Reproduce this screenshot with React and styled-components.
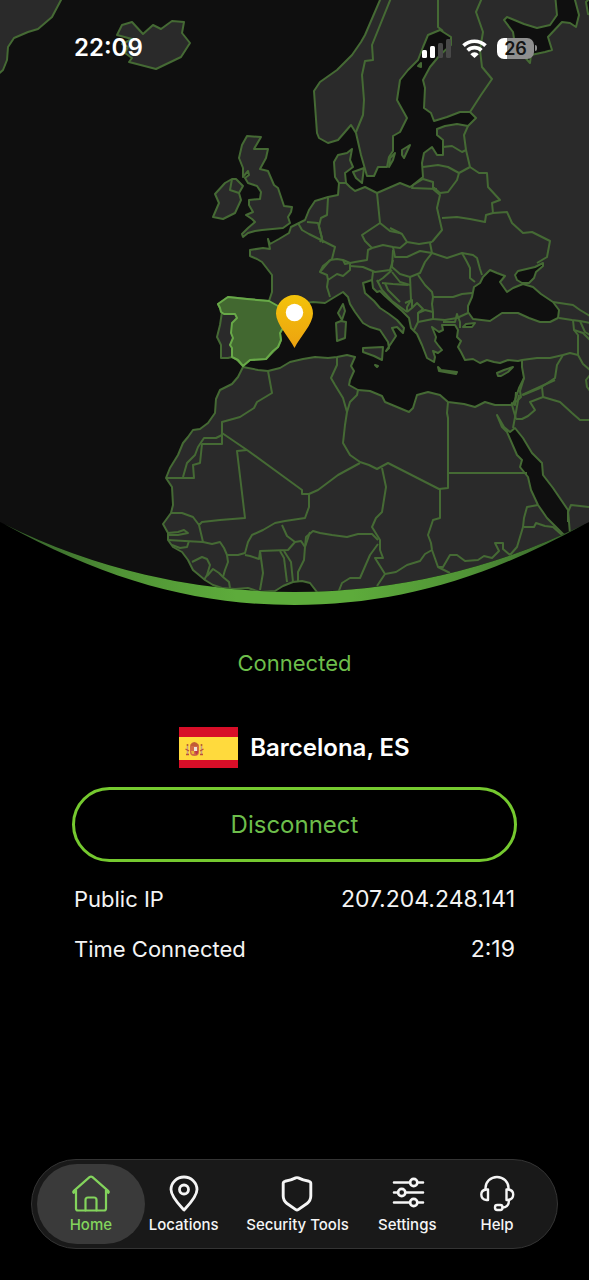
import React from "react";
import styled, { createGlobalStyle, css } from "styled-components";

const GlobalStyle = createGlobalStyle`
  * { box-sizing: border-box; }
  body { margin: 0; background: #000; }
`;

const Screen = styled.div`
  position: relative;
  min-height: 100vh;
  display: flex;
  flex-direction: column;
  background: #000;
  color: #fff;
  font-family: Inter, "Liberation Sans", sans-serif;
`;

const StatusBar = styled.header`
  position: absolute;
  inset: 0 0 auto 0;
  display: flex;
  align-items: center;
  justify-content: space-between;
  padding: 32px 52px 0 74px;
`;

const Clock = styled.time`
  font-size: 24px;
  line-height: 32px;
  font-weight: 600;
`;

const Indicators = styled.div`
  display: flex;
  align-items: center;
  gap: 10px;
`;

const Battery = styled.div`
  display: flex;
  align-items: center;
  gap: 1px;
`;

const BatteryLevel = styled.span`
  width: 37px;
  border-radius: 7px;
  background: linear-gradient(90deg, #fff 28%, #8f8f8f 28%);
  color: #161616;
  font-size: 18px;
  line-height: 21px;
  font-weight: 600;
  text-align: center;
`;

const BatteryTip = styled.span`
  width: 2px;
  height: 6px;
  border-radius: 0 2px 2px 0;
  background: #8f8f8f;
`;

const WorldMap = styled.svg`
  display: block;
  width: 100%;
  height: auto;
`;

const Panel = styled.main`
  display: flex;
  flex-direction: column;
  align-items: stretch;
  padding: 43px 72px 40px;
`;

const ConnectionState = styled.p`
  margin: 0 0 49px;
  color: #6dbe4b;
  font-size: 22px;
  line-height: 30px;
  text-align: center;
`;

const Place = styled.div`
  display: flex;
  align-items: center;
  justify-content: center;
  gap: 12px;
  margin-bottom: 19px;
`;

const Flag = styled.svg`
  display: block;
  width: 59px;
  height: 41px;
`;

const PlaceName = styled.h1`
  margin: 0;
  font-size: 24px;
  line-height: 30px;
  font-weight: 600;
`;

const DisconnectButton = styled.button`
  height: 75px;
  border: 3px solid #75c92f;
  border-radius: 38px;
  background: transparent;
  color: #6dbe4b;
  font: inherit;
  font-size: 24px;
  cursor: pointer;
`;

const Details = styled.dl`
  display: flex;
  flex-direction: column;
  gap: 20px;
  margin: 22px 0 0;
  padding: 0 2px;
`;

const DetailRow = styled.div`
  display: flex;
  justify-content: space-between;
  font-size: 22px;
  line-height: 30px;
  color: #f4f4f4;

  dd {
    margin: 0;
    font-size: 23px;
  }
`;

const TabBar = styled.nav`
  display: grid;
  grid-template-columns: 108fr 78fr 150fr 70fr 110fr;
  margin: auto 31px 31px;
  padding: 4px 5px;
  border: 1px solid #343434;
  border-radius: 45px;
  background: #191919;
`;

const TabLink = styled.a`
  display: flex;
  flex-direction: column;
  align-items: center;
  height: 80px;
  padding-top: 10px;
  border-radius: 40px;
  color: #f5f5f5;
  font-size: 15px;
  line-height: 22px;
  font-weight: 500;
  white-space: nowrap;
  text-decoration: none;
  ${(p) => p.$active && css`
    background: #3a3a3a;
    color: #83d45c;
  `}
`;

const TabGlyph = styled.svg`
  display: block;
  width: 40px;
  height: 40px;
  fill: none;
  stroke: currentColor;
  stroke-linecap: round;
  stroke-linejoin: round;
`;

const MAINLAND =
  "M380 -6 380 0 365 35 361 42 352 55 344 63 337 70 320 82 314 91 317 133 319 138 328 143 338 140 351 125 356 133 361 155 367 176 374 176 378 167 387 167 389 157 393 151 393 136 400 132 407 118 397 100 400 80 408 70 418 60 423 47 428 35 440 30 451 37 451 45 440 55 430 67 423 80 425 88 424 108 431 113 434 121 447 117 460 112 470 112 476 118 468 126 457 124 445 126 437 129 437 135 443 140 443 155 437 155 432 147 424 153 422 163 423 177 413 185 410 187 400 183 377 193 365 187 355 191 350 187 346 183 345 173 353 167 350 160 352 149 347 153 338 155 334 162 335 177 339 183 338 195 328 197 315 201 309 210 305 220 295 225 291 227 289 233 279 239 270 244 268 239 270 249 263 248 250 250 250 256 257 259 262 262 272 275 272 292 269 301 247 299 228 297 218 304 222 312 220 325 217 337 221 345 221 358 228 358 232 357 237 360 243 366 250 360 266 359 278 347 281 340 280 333 283 328 290 320 294 308 305 303 313 302 325 303 333 298 343 292 348 297 350 304 355 312 363 323 370 327 380 330 384 336 388 342 389 348 386 351 390 345 396 336 392 328 397 327 403 333 404 328 397 320 389 314 380 308 374 301 365 293 363 283 372 280 373 288 377 292 380 291 385 296 394 304 402 311 409 318 411 328 417 334 422 345 427 358 434 362 435 357 433 351 438 353 442 350 438 345 435 341 436 337 432 327 439 332 443 330 442 325 448 325 455 325 458 330 457 337 461 341 458 347 461 352 465 360 473 359 480 363 487 360 494 362 500 363 508 360 518 361 522 360 522 367 524 378 519 388 515 400 512 405 495 405 485 402 475 407 464 404 448 402 440 395 428 392 417 395 413 408 409 412 397 407 385 402 382 396 370 391 358 390 349 385 350 380 354 371 351 366 355 357 347 355 337 357 328 358 315 357 303 359 290 362 280 368 268 371 258 370 243 367 238 377 232 384 220 390 216 399 215 413 208 423 200 429 193 430 188 437 183 443 178 455 170 468 166 478 172 487 173 505 171 513 163 524 168 533 168 540 173 547 182 552 188 560 193 570 205 580 213 585 222 588 235 589 248 588 260 592 275 591 283 586 293 582 302 581 310 583 317 592 325 620 600 620 600 -6Z";

const ISLANDS = [
  "M-4 -4 62 -4 61 0 52 17 38 29 28 32 14 38 8 47 7 60 3 70 -4 76Z",
  "M117 35 122 25 132 22 143 34 153 25 161 29 172 21 184 22 182 33 190 43 181 57 156 69 129 62 132 58 125 53 128 47 122 44 132 39Z",
  "M232 179 225 183 215 194 219 203 213 217 223 219 235 213 241 200 239 193 243 186 236 179Z",
  "M247 136 261 137 254 149 268 149 266 158 260 169 268 171 274 185 278 188 284 206 292 207 291 212 288 217 290 223 283 228 262 230 255 231 248 233 243 237 242 234 248 228 255 222 252 219 246 215 253 212 249 205 249 200 260 199 261 192 257 186 248 183 245 178 249 175 248 171 243 177 243 168 239 158 242 145Z",
  "M353 172 364 168 362 183 356 178Z",
  "M402 150 410 145 404 158 402 155Z",
  "M395 153 393 160 389 167 390 158Z",
  "M418 66 421 63 421 67Z",
  "M343 304 338 313 342 320 345 311Z",
  "M336 323 341 321 346 322 345 338 337 341Z",
  "M363 348 383 347 382 360 374 356 363 352Z",
  "M375 365 378 366 377 367Z",
  "M438 367 441 370 457 372 456 374 439 371Z",
  "M497 373 504 370 513 367 508 372 501 376 498 376Z",
];

const SEAS = [
  "M490 270 497 273 505 276 500 282 507 292 513 288 523 284 533 287 541 294 553 302 559 310 558 318 550 322 540 322 529 318 518 313 502 313 490 321 473 319 468 312 468 306 472 297 474 287 480 283 483 277Z",
  "M515 275 518 271 535 267 543 263 543 266 536 272 534 278 529 283 522 283 517 280Z",
  "M463 327 466 324 475 323 472 327Z",
  "M497 415 502 427 507 432 517 455 522 460 520 467 528 477 531 490 538 505 547 518 564 535 570 534 568 510 553 488 543 475 542 463 532 453 523 438 515 428 510 432 504 427Z",
  "M555 -6 557 15 550 25 537 28 524 24 507 17 504 20 513 32 515 45 522 54 530 63 531 55 545 52 552 50 548 37 562 22 570 23 576 27 579 15 575 0 576 -6Z",
  "M592 -4 586 2 588 14 592 15Z",
];

const BORDERS = [
  "391,-2 372,45 373,60 365,61 362,75 364,100 363,115 356,132",
  "438,-2 438,27 443,31",
  "482,-2 476,12 483,32 480,50 482,67 492,79 481,95 470,112",
  "468,126 464,135 466,150 462,152 452,146 443,147",
  "466,150 470,167 459,173 448,167 438,165 423,167",
  "459,173 457,180 448,192 440,193 433,187 433,182 423,179 413,185 412,188 437,189",
  "470,167 479,173 487,173 488,187 500,200 492,203 493,213 486,215 485,222 470,219 457,217 442,218",
  "433,189 440,195 437,208 442,230 432,242",
  "493,213 507,212 512,223 523,233 532,232 550,241 547,257 537,263",
  "432,242 419,244 407,242 402,234 390,228",
  "377,193 380,223 390,231 400,233",
  "380,223 362,235 365,241 372,248 383,245 393,247 400,248 407,242",
  "393,247 395,257 407,257 420,251 432,253 430,243",
  "432,253 447,258 462,253 467,262 470,268 470,278 475,282",
  "462,253 473,255 477,258 480,269 482,275",
  "432,253 425,262 420,273 410,277 400,274 392,267 393,250",
  "418,275 425,285 432,292 433,297 453,297 462,294 472,293",
  "433,297 432,304 433,312 433,319 445,320 457,318 468,313",
  "410,277 411,300 407,307 407,312",
  "392,272 400,282 410,285",
  "382,283 393,284 408,285",
  "418,313 425,310 433,312",
  "407,312 412,308 417,303 423,309 418,313 418,322 414,330",
  "412,308 412,300 405,303",
  "418,322 433,319",
  "443,322 455,322 457,314 460,322 460,328",
  "553,302 573,305 580,310 590,316",
  "559,318 572,320 580,321 590,323",
  "573,320 574,330 583,333 590,340",
  "580,321 585,332 590,335",
  "574,330 578,335 578,355 570,353 563,355 550,358 537,358 522,360",
  "563,355 557,365 555,378 540,388 523,395",
  "578,355 583,364 590,370",
  "590,375 586,380 587,387 590,391",
  "542,387 543,397 530,402 535,410 528,416 522,419 516,419",
  "522,395 555,380",
  "524,378 520,391 521,397 516,402",
  "519,395 516,412 513,428",
  "516,392 515,405 511,403",
  "512,405 516,419",
  "543,397 560,402 572,413 580,420 590,420",
  "448,402 447,413 448,418 448,488 439,489 388,463 377,469 369,465 360,462",
  "448,473 527,473",
  "440,489 440,518 433,520 428,535 431,543 432,550 438,567 450,573",
  "432,550 425,554 420,561 407,565 396,572 385,574 377,586",
  "382,468 386,487 382,512 376,518 372,527 380,540 380,550 383,558 375,558 385,574",
  "310,532 305,547 304,560 298,572 298,582",
  "305,547 306,537 313,531 320,533 332,535 347,537 358,534 372,534 378,540",
  "378,544 370,555 360,578 350,578 342,583 338,593",
  "538,505 527,507 524,518 523,527 517,547 510,555 503,549 503,543 495,543 499,551 492,558 484,556 478,560 465,561 457,555 450,555 443,567 438,567",
  "524,527 534,527 536,523 545,526 553,527 562,535",
  "568,522 568,512 571,505 589,507",
  "268,371 272,393 257,402 254,408 240,417 222,422 222,444 202,444 200,463 193,465 194,478 166,478",
  "222,435 216,438 204,438 198,447 195,455 187,463 183,477",
  "222,433 247,450 302,490 302,494 309,494 318,490 338,475 360,463",
  "247,450 237,451 245,518 220,520 202,522 199,525 193,517 182,513 171,513",
  "199,525 203,542 185,541 168,540",
  "168,533 178,532 184,530 188,533 178,535 168,535",
  "189,541 187,547 180,548 172,545",
  "337,357 337,365 331,378 335,385 343,398 347,412 345,425 343,443 350,455 360,462",
  "347,412 350,402 357,395 358,390",
  "309,494 309,507 305,518 285,521 275,523 263,530 252,535 248,542 245,553 238,555 227,555 224,548 220,542 212,544 203,542",
  "282,525 287,536 295,542 288,550 260,551 259,559 250,556 245,555",
  "260,551 263,573 260,590",
  "280,551 284,558 287,582",
  "284,551 291,562 293,582",
  "295,542 301,541 305,547",
  "227,555 228,562 225,570 223,577 229,582 230,588",
  "192,562 202,557 207,559 210,565 207,575 204,580",
  "207,576 213,569 219,573 223,577",
  "298,223 302,230 309,234 317,238 335,247 332,259 323,266 320,272",
  "307,222 318,223 322,238 320,242",
  "328,198 327,215 321,218 319,226 323,243",
  "338,183 347,183",
  "330,260 320,272 327,275 328,280 337,274 343,276 350,270 350,263 343,260 337,259 330,260",
  "328,280 327,287 330,297",
  "343,260 345,264 355,262 367,260 368,250 372,248",
  "350,266 363,267 375,272 390,270 393,260",
  "373,272 372,280",
  "377,282 383,278 392,270",
  "377,280 382,290 392,301 407,312",
  "385,283 388,290 400,302",
  "232,179 230,190 239,193",
];

const SPAIN =
  "M218 304 228 297 247 299 269 301 278 306 286 309 290 318 283 328 280 333 281 340 278 347 273 351 266 359 250 360 243 366 238 360 232 357 232 348 230 345 233 338 231 333 232 323 237 318 235 314 224 314 221 312 220 308Z";

function EuropeMap() {
  return (
    <WorldMap viewBox="0 0 589 605" role="img" aria-label="Map with Spain highlighted">
      <defs>
        <clipPath id="globe">
          <path d="M0 0H589V522A655 655 0 0 1 0 522Z" />
        </clipPath>
        <linearGradient id="rim">
          <stop offset="0" stopColor="#33592a" />
          <stop offset="0.2" stopColor="#509336" />
          <stop offset="0.4" stopColor="#5dab3b" />
          <stop offset="0.6" stopColor="#5dab3b" />
          <stop offset="0.8" stopColor="#509336" />
          <stop offset="1" stopColor="#33592a" />
        </linearGradient>
        <linearGradient id="pin" x1="0" y1="0" x2="0" y2="1">
          <stop offset="0" stopColor="#f3c30a" />
          <stop offset="1" stopColor="#eda210" />
        </linearGradient>
      </defs>
      <g clipPath="url(#globe)" stroke="#456a34" strokeWidth="2" strokeLinejoin="round">
        <rect width="589" height="605" fill="#0f0f0f" stroke="none" />
        <path d={MAINLAND} fill="#2a2a2a" />
        {ISLANDS.map((d) => <path key={d} d={d} fill="#2a2a2a" />)}
        {SEAS.map((d) => <path key={d} d={d} fill="#0f0f0f" />)}
        {BORDERS.map((points) => <polyline key={points} points={points} fill="none" />)}
        <path d={SPAIN} fill="#426830" stroke="#68a948" />
      </g>
      <path
        d="M4 524A655 655 0 0 0 585 524C480 582 390 605 294.500 605C199 605 109 582 4 524Z"
        fill="url(#rim)"
      />
      <path
        d="M294.500 348C289 337 276 324 276 313.500A18.500 18.500 0 0 1 313 313.500C313 324 300 337 294.500 348Z"
        fill="url(#pin)"
      />
      <circle cx="294.500" cy="312.500" r="8.700" fill="#fff" />
    </WorldMap>
  );
}

function SignalIcon() {
  return (
    <svg width="30" height="19" viewBox="0 0 30 19" aria-hidden="true">
      <rect x="0" y="11" width="5" height="8" rx="1.500" fill="#fff" />
      <rect x="8" y="7" width="5" height="12" rx="1.500" fill="#fff" />
      <rect x="16" y="4" width="5" height="15" rx="1.500" fill="#484848" />
      <rect x="24" y="0" width="5" height="19" rx="1.500" fill="#484848" />
    </svg>
  );
}

function WifiIcon() {
  return (
    <svg width="25" height="19" viewBox="0 0 25 19" fill="none" stroke="#fff" strokeWidth="3.700" aria-hidden="true">
      <path d="M1.500 6.700A15.800 15.800 0 0 1 23.500 6.700" />
      <path d="M5.600 11.300A10 10 0 0 1 19.400 11.300" />
      <path d="M12.500 19 8.300 15.200A5.600 5.600 0 0 1 16.700 15.200Z" fill="#fff" stroke="none" />
    </svg>
  );
}

function SpainFlag() {
  return (
    <Flag viewBox="0 0 59 41" role="img" aria-label="Flag of Spain">
      <rect width="59" height="41" fill="#d80e28" />
      <rect y="10" width="59" height="23" fill="#ffda3d" />
      <path d="M11 18Q15 12 20 18L19 20H12Z" fill="#c25c36" />
      <path d="M11 19H20V25Q20 29 15.500 29Q11 29 11 25Z" fill="#d16a45" />
      <path d="M15 20H18V24H15Z" fill="#eee2d7" />
      <path d="M12 24H15V27H13Z" fill="#e9b535" />
      <path d="M16 24H19V26L17 28Z" fill="#bc384c" />
      <path d="M8.500 19V27M22.500 19V27" stroke="#c6a184" strokeWidth="1.500" />
      <path d="M6.500 22 10 24M21 24 24.500 22M7 27.500H10M21 27.500H24" stroke="#bd5139" strokeWidth="1.300" />
      <circle cx="8.500" cy="18" r="1" fill="#b25732" />
      <circle cx="22.500" cy="18" r="1" fill="#b25732" />
    </Flag>
  );
}

const GLYPHS = {
  home: (
    <g strokeWidth="2.200">
      <path d="M5 16.500 2.800 18.800Q1.800 18 2.600 17.200L18.500 3.200Q20 2 21.500 3.200L37.400 17.200Q38.200 18 37.200 18.800L35 16.500" />
      <path d="M5 16.500V34.500Q5 36.500 7 36.500H33Q35 36.500 35 34.500V16.500" />
      <path d="M14.500 36.500V26Q14.500 23.500 17 23.500H23Q25.500 23.500 25.500 26V36.500" />
    </g>
  ),
  locations: (
    <g strokeWidth="2.800">
      <path d="M20 36C16.500 32 7 23 7 15.500A13 12.500 0 0 1 33 15.500C33 23 23.500 32 20 36Z" />
      <circle cx="20" cy="15.500" r="4.500" />
    </g>
  ),
  security: (
    <path
      strokeWidth="2.900"
      d="M18.700 3.900Q20 3.300 21.300 3.900Q26 6.300 32 7.300Q33.800 7.700 33.800 9.500V22Q33.800 26.500 30 29.500L21.200 35.600Q20 36.400 18.800 35.600L10 29.500Q6.200 26.500 6.200 22V9.500Q6.200 7.700 8 7.300Q14 6.300 18.700 3.900Z"
    />
  ),
  settings: (
    <g strokeWidth="2.600">
      <path d="M7 8.500H23M30.500 8.500H36M7 18.500H11M18.500 18.500H36M7 28.500H23M30.500 28.500H36" />
      <circle cx="26.700" cy="8.500" r="3.600" />
      <circle cx="14.700" cy="18.500" r="3.600" />
      <circle cx="26.700" cy="28.500" r="3.600" />
    </g>
  ),
  help: (
    <g strokeWidth="2.400">
      <path d="M8.500 15V14A11.500 11 0 0 1 31.500 14V15" />
      <path d="M11 15.500H9.500Q4.300 16 4.300 20.500Q4.300 25.500 9.500 26H11Z" />
      <path d="M29.500 15.500H31Q36.200 16 36.200 20.500Q36.200 25.500 31 26H29.500Z" />
      <path d="M32 26Q32 33.500 25.500 33.500" />
      <rect x="18" y="31" width="7.500" height="5" rx="2.200" />
    </g>
  ),
};

const TABS = [
  { id: "home", label: "Home" },
  { id: "locations", label: "Locations" },
  { id: "security", label: "Security Tools" },
  { id: "settings", label: "Settings" },
  { id: "help", label: "Help" },
];

export default function App() {
  return (
    <Screen>
      <GlobalStyle />
      <EuropeMap />
      <StatusBar>
        <Clock>22:09</Clock>
        <Indicators>
          <SignalIcon />
          <WifiIcon />
          <Battery>
            <BatteryLevel>26</BatteryLevel>
            <BatteryTip />
          </Battery>
        </Indicators>
      </StatusBar>
      <Panel>
        <ConnectionState>Connected</ConnectionState>
        <Place>
          <SpainFlag />
          <PlaceName>Barcelona, ES</PlaceName>
        </Place>
        <DisconnectButton type="button">Disconnect</DisconnectButton>
        <Details>
          <DetailRow>
            <dt>Public IP</dt>
            <dd>207.204.248.141</dd>
          </DetailRow>
          <DetailRow>
            <dt>Time Connected</dt>
            <dd>2:19</dd>
          </DetailRow>
        </Details>
      </Panel>
      <TabBar aria-label="Main">
        {TABS.map(({ id, label }) => (
          <TabLink key={id} href={`#${id}`} $active={id === "home"} aria-current={id === "home" ? "page" : undefined}>
            <TabGlyph viewBox="0 0 40 40" aria-hidden="true">{GLYPHS[id]}</TabGlyph>
            {label}
          </TabLink>
        ))}
      </TabBar>
    </Screen>
  );
}
